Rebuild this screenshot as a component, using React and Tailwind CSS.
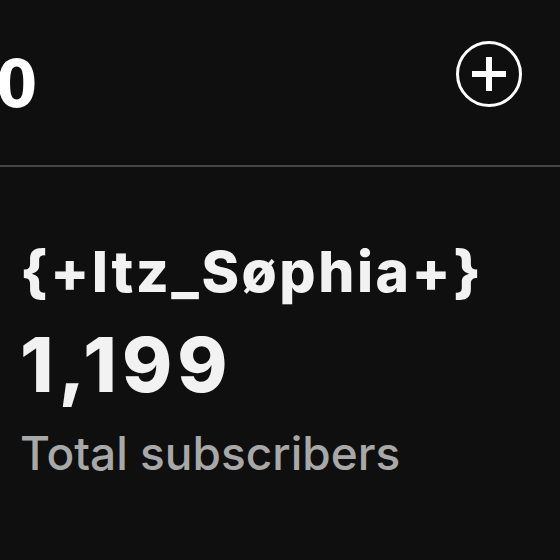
export default function App() {
  return (
    <div className="w-[560px] h-[560px] bg-[#0f0f0f] overflow-hidden flex flex-col" style={{ fontFamily: "Inter, 'Noto Sans', sans-serif" }}>
      <div className="h-[165px] flex items-center justify-between pb-[14px]">
        <div className="text-white font-bold text-[66px] leading-none -ml-[4px] mt-[18px]" style={{ fontFamily: "'DejaVu Sans Condensed', 'Liberation Sans Narrow', Roboto, sans-serif" }}>0</div>
        <svg width="70" height="70" viewBox="0 0 70 70" className="mr-[36px] -mt-[4px]">
          <circle cx="35" cy="35" r="31.5" fill="none" stroke="white" strokeWidth="3" />
          <path d="M35 18 V52 M18 35 H52" stroke="white" strokeWidth="6" />
        </svg>
      </div>
      <div className="h-[2px] bg-[#464646]" />
      <div className="px-[20px] pt-[72px] flex flex-col">
        <div className="text-[#f2f2f2] font-extrabold text-[57px] leading-[66px] tracking-[2.5px]">{"{+Itz_Søphia+}"}</div>
        <div className="text-[#f2f2f2] font-extrabold text-[76px] leading-[80px] tracking-[5px] mt-[19px]">1,199</div>
        <div className="text-[#a8a8a8] font-medium text-[46px] leading-[56px] mt-[21px]">Total subscribers</div>
      </div>
    </div>
  );
}
